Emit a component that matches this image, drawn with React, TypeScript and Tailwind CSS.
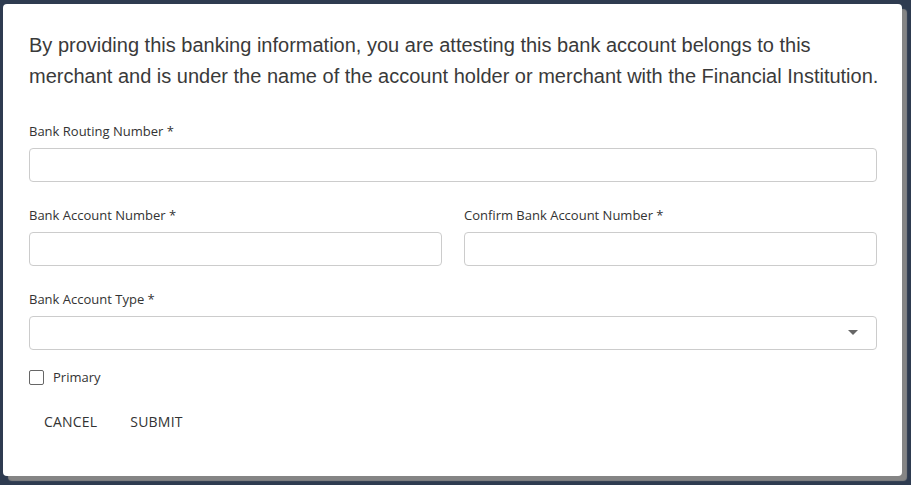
import { useState } from "react";

function Field({ label, className = "" }: { label: string; className?: string }) {
  return (
    <div className={`flex flex-col ${className}`}>
      <label className="text-[13px] leading-[18px] text-[#333] mb-2">{label}</label>
      <input className="h-[34px] w-full rounded-[4px] border border-[#cccccc] bg-white px-3 outline-none" />
    </div>
  );
}

export default function App() {
  const [primary, setPrimary] = useState(false);

  return (
    <div className="min-h-screen bg-white" style={{ fontFamily: '"Open Sans", sans-serif' }}>
      <div className="w-[911px] h-[485px] bg-[#2e3b50] pt-[4px] pl-[3px]">
        <div className="w-[899px] h-[472px] rounded-[4px] bg-white shadow-[5px_5px_1px_#858585] pt-[26px] pl-[26px] pr-[25px]">
          <p
            className="text-[20px] leading-[31px] text-[#3a3a3a] whitespace-nowrap"
            style={{ fontFamily: '"Liberation Sans", Arial, sans-serif' }}
          >
            By providing this banking information, you are attesting this bank account belongs to this
            <br />
            merchant and is under the name of the account holder or merchant with the Financial Institution.
          </p>

          <Field label="Bank Routing Number *" className="mt-[30px]" />

          <div className="mt-[24px] grid grid-cols-2 gap-[22px]">
            <Field label="Bank Account Number *" />
            <Field label="Confirm Bank Account Number *" />
          </div>

          <div className="mt-[24px] flex flex-col">
            <label className="text-[13px] leading-[18px] text-[#333] mb-2">Bank Account Type *</label>
            <button className="relative h-[34px] w-full rounded-[4px] border border-[#cccccc] bg-white">
              <span className="absolute right-[18px] top-[13px] h-0 w-0 border-x-[5px] border-t-[5px] border-x-transparent border-t-[#666]" />
            </button>
          </div>

          <label className="mt-[20px] flex items-center gap-[9px] cursor-pointer">
            <span
              onClick={() => setPrimary(!primary)}
              className="h-[15px] w-[15px] rounded-[2px] border-[1.5px] border-[#666] bg-white"
            />
            <span className="text-[13px] leading-[15px] text-[#333]">Primary</span>
          </label>

          <div className="mt-[18px] flex items-center gap-[2px]">
            <button className="h-[36px] px-[15px] text-[14px] font-medium tracking-[0.2px] text-[#333] uppercase">
              Cancel
            </button>
            <button className="h-[36px] px-[16px] text-[14px] font-medium tracking-[0.2px] text-[#333] uppercase">
              Submit
            </button>
          </div>
        </div>
      </div>
    </div>
  );
}
